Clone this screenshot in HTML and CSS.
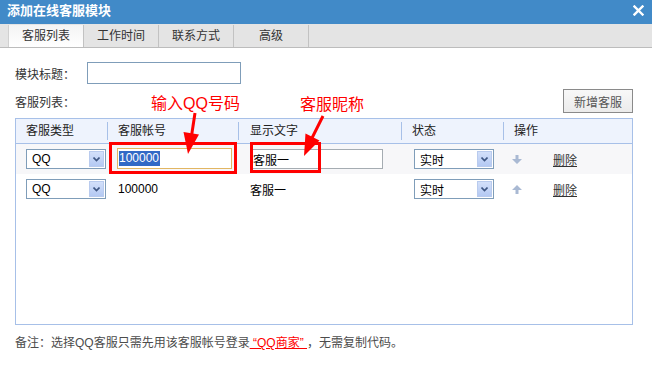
FILE: index.html
```html
<!DOCTYPE html>
<html lang="zh-CN">
<head>
    <meta charset="UTF-8">
    <title>添加在线客服模块</title>
    <link rel="stylesheet" href="styles.css">
</head>
<body>
    <div class="dialog">
        <div class="titlebar">
            <span class="title">添加在线客服模块</span>
            <svg class="close" width="11" height="11" viewBox="0 0 11 11">
                <path d="M1.5 1.5 L9.5 9.5 M9.5 1.5 L1.5 9.5" stroke="#fff" stroke-width="2.4" stroke-linecap="square"/>
            </svg>
        </div>

        <div class="tabs">
            <span class="tab active">客服列表</span>
            <span class="tab">工作时间</span>
            <span class="tab">联系方式</span>
            <span class="tab">高级</span>
        </div>

        <div class="content">
            <div class="field">
                <span class="label">模块标题：</span>
                <div class="input title-input"></div>
            </div>

            <div class="list-bar">
                <span>客服列表：</span>
                <button class="btn">新增客服</button>
            </div>

            <div class="grid-table">
                <div class="thead">
                    <div class="th">客服类型</div>
                    <div class="th">客服帐号</div>
                    <div class="th">显示文字</div>
                    <div class="th">状态</div>
                    <div class="th">操作</div>
                </div>

                <div class="trow alt">
                    <div class="td"><div class="select type-select"><span>QQ</span><i class="drop"><svg width="7" height="5" viewBox="0 0 7 5"><path d="M0.5 0.5 L3.5 3.5 L6.5 0.5" fill="none" stroke="#3f5783" stroke-width="1.6"/></svg></i></div></div>
                    <div class="td col-account"><div class="input focus"><span class="selected">100000</span></div></div>
                    <div class="td col-name"><div class="input name-input">客服一</div></div>
                    <div class="td col-state"><div class="select state-select"><span>实时</span><i class="drop"><svg width="7" height="5" viewBox="0 0 7 5"><path d="M0.5 0.5 L3.5 3.5 L6.5 0.5" fill="none" stroke="#3f5783" stroke-width="1.6"/></svg></i></div></div>
                    <div class="td col-op">
                        <svg class="move" width="10" height="9" viewBox="0 0 10 9"><path d="M3.5 0 H6.5 V4 H10 L5 9 L0 4 H3.5 Z" fill="#a9b9d3"/></svg>
                        <a class="del" href="#">删除</a>
                    </div>
                </div>

                <div class="trow">
                    <div class="td"><div class="select type-select"><span>QQ</span><i class="drop"><svg width="7" height="5" viewBox="0 0 7 5"><path d="M0.5 0.5 L3.5 3.5 L6.5 0.5" fill="none" stroke="#3f5783" stroke-width="1.6"/></svg></i></div></div>
                    <div class="td col-account plain">100000</div>
                    <div class="td col-name plain">客服一</div>
                    <div class="td col-state"><div class="select state-select"><span>实时</span><i class="drop"><svg width="7" height="5" viewBox="0 0 7 5"><path d="M0.5 0.5 L3.5 3.5 L6.5 0.5" fill="none" stroke="#3f5783" stroke-width="1.6"/></svg></i></div></div>
                    <div class="td col-op">
                        <svg class="move" width="10" height="9" viewBox="0 0 10 9"><path d="M3.5 9 H6.5 V5 H10 L5 0 L0 5 H3.5 Z" fill="#a9b9d3"/></svg>
                        <a class="del" href="#">删除</a>
                    </div>
                </div>
            </div>

            <p class="note">备注：选择QQ客服只需先用该客服帐号登录<a class="note-link" href="#">&nbsp;“QQ商家”&nbsp;</a>，无需复制代码。</p>
        </div>

        <!-- annotations drawn over the screenshot -->
        <div class="marks">
            <span class="mark-text mark-qq">输入QQ号码</span>
            <span class="mark-text mark-nick">客服昵称</span>
            <div class="mark-box box-qq"></div>
            <div class="mark-box box-nick"></div>
            <svg class="arrows" width="652" height="373" viewBox="0 0 652 373">
                <line x1="195" y1="113" x2="191.5" y2="136" stroke="#f00" stroke-width="3"/>
                <polygon points="183.5,132 199,134.5 188,154" fill="#f00"/>
                <line x1="323" y1="116" x2="311" y2="140" stroke="#f00" stroke-width="3"/>
                <polygon points="305.5,133.5 319.5,140.5 304,156" fill="#f00"/>
            </svg>
        </div>
    </div>
</body>
</html>
```

FILE: styles.css
```css
body {
    margin: 0;
    padding: 0;
    background: #fff;
    font-family: "Liberation Sans", "Noto Sans CJK SC", sans-serif;
    font-size: 12px;
    color: #333;
}

.dialog {
    position: relative;
    width: 652px;
    height: 373px;
    overflow: hidden;
}

.titlebar {
    height: 24px;
    background: #418ac8;
    display: flex;
    justify-content: space-between;
    align-items: center;
    padding: 0 8px 0 7px;
    box-sizing: border-box;
}

.title {
    color: #fff;
    font-size: 13px;
    font-weight: bold;
    line-height: 22px;
    padding-bottom: 2px;
}

.close {
    margin-bottom: 3px;
}

.tabs {
    height: 24px;
    box-sizing: border-box;
    background: #e4e4e4;
    border-bottom: 1px solid #bcbcbc;
    padding: 1px 0 0 8px;
    display: flex;
}

.tab {
    width: 74px;
    height: 22px;
    line-height: 22px;
    text-align: center;
    color: #333;
    border-right: 1px solid #c2c2c2;
}

.tab:first-child {
    border-left: 1px solid #d0d0d0;
}

.tab.active {
    background: linear-gradient(#f4f4f4, #ffffff);
}

.content {
    padding: 0 19px 0 15px;
}

.field {
    display: flex;
    align-items: center;
    margin-top: 14px;
}

.label {
    width: 72px;
}

.input {
    box-sizing: border-box;
    height: 21px;
    border: 1px solid #a5acb2;
    background: #fff;
    display: flex;
    align-items: center;
    font-size: 12px;
    color: #000;
}

.title-input {
    width: 154px;
    height: 22px;
    border-color: #7f9db9;
}

.list-bar {
    display: flex;
    justify-content: space-between;
    align-items: center;
    margin-top: 5px;
}

.btn {
    width: 70px;
    height: 24px;
    border: 1px solid #8a8a8a;
    background: linear-gradient(#f8f8f8, #ebebeb);
    color: #555;
    font-family: inherit;
    font-size: 12px;
    padding: 0;
}

.grid-table {
    margin-top: 5px;
    height: 207px;
    box-sizing: border-box;
    border: 1px solid #a7c0e8;
}

.thead,
.trow {
    display: grid;
    grid-template-columns: 91px 131px 163px 102px 1fr;
}

.thead {
    height: 24px;
    background: #eef3fd;
    border-bottom: 1px solid #a7c0e8;
    align-items: center;
}

.th {
    height: 18px;
    line-height: 18px;
    padding-left: 10px;
    color: #222;
}

.th + .th {
    border-left: 1px solid #a7c0e8;
}

.th:nth-child(3) {
    padding-left: 11px;
}

.trow {
    height: 30px;
    align-items: center;
}

.trow.alt {
    background: #f7f7f9;
}

.td {
    padding-left: 10px;
    display: flex;
    align-items: center;
}

.td.plain {
    color: #000;
}

.col-account.plain {
    padding-left: 11px;
}

.col-name {
    padding-left: 12px;
}

.col-state {
    padding-left: 13px;
}

.col-op {
    padding-left: 9px;
}

.select {
    box-sizing: border-box;
    width: 80px;
    height: 20px;
    border: 1px solid #7f9db9;
    background: #fff;
    display: flex;
    align-items: center;
    justify-content: space-between;
    padding: 0 1px 0 5px;
    color: #000;
}

.drop {
    width: 15px;
    height: 16px;
    box-sizing: border-box;
    border: 1px solid #b9cbee;
    background: linear-gradient(#d3e0fa, #b4c9f3);
    display: flex;
    align-items: center;
    justify-content: center;
}

.input.focus {
    width: 115px;
    border-color: #e2b662;
    padding-left: 1px;
    margin-top: -1px;
}

.selected {
    background: #3169c6;
    color: #fff;
    line-height: 15px;
    padding-right: 1px;
}

.name-input {
    width: 133px;
    height: 20px;
    padding-left: 2px;
}

.move {
    margin-right: 31px;
}

.del {
    color: #333;
    text-decoration: underline;
}

.note {
    margin: 9px 0 0;
    line-height: 18px;
    color: #4c4c4c;
}

.note-link {
    color: #f00;
    text-decoration: underline;
}

.marks {
    position: absolute;
    left: 0;
    top: 0;
    width: 652px;
    height: 373px;
    pointer-events: none;
}

.mark-text {
    position: absolute;
    color: #f00;
    font-size: 16px;
    line-height: 18px;
}

.mark-qq {
    left: 151px;
    top: 95px;
}

.mark-nick {
    left: 300px;
    top: 96px;
}

.mark-box {
    position: absolute;
    box-sizing: border-box;
    border: 3px solid #f00;
}

.box-qq {
    left: 109px;
    top: 142px;
    width: 128px;
    height: 32px;
}

.box-nick {
    left: 250px;
    top: 142px;
    width: 71px;
    height: 31px;
}

.arrows {
    position: absolute;
    left: 0;
    top: 0;
}
```
